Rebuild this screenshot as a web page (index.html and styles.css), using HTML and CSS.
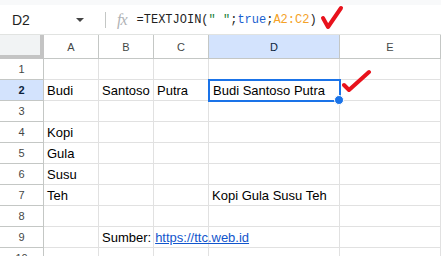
FILE: index.html
```html
<!DOCTYPE html>
<html lang="en">
<head>
    <meta charset="UTF-8">
    <meta name="viewport" content="width=device-width, initial-scale=1.0">
    <title>TEXTJOIN - Sheet</title>
    <link rel="stylesheet" href="styles.css">
</head>
<body>
    <div class="top-strip"></div>

    <!-- Formula bar -->
    <div class="formula-bar">
        <div class="name-box">
            <span class="cell-ref">D2</span>
            <span class="caret"></span>
        </div>
        <div class="divider"></div>
        <span class="fx">fx</span>
        <div class="formula">=TEXTJOIN(<span class="f-str">" "</span>;<span class="f-bool">true</span>;<span class="f-range">A2:C2</span>)</div>
        <svg class="tick tick-formula" width="24" height="26" viewBox="0 0 24 26">
            <path d="M3 13 L8 22 L21 3" />
        </svg>
    </div>

    <!-- Sheet grid -->
    <div class="sheet">
        <div class="corner"></div>
        <div class="col-head">A</div>
        <div class="col-head">B</div>
        <div class="col-head">C</div>
        <div class="col-head active">D</div>
        <div class="col-head">E</div>

        <div class="row-head">1</div>
        <div class="cell"></div><div class="cell"></div><div class="cell"></div><div class="cell"></div><div class="cell"></div>

        <div class="row-head active">2</div>
        <div class="cell">Budi</div>
        <div class="cell">Santoso</div>
        <div class="cell">Putra</div>
        <div class="cell selected">
            Budi Santoso Putra
            <span class="handle"></span>
            <svg class="tick tick-cell" width="30" height="24" viewBox="0 0 30 24">
                <path d="M2 16 L7 21 L27 3" />
            </svg>
        </div>
        <div class="cell"></div>

        <div class="row-head">3</div>
        <div class="cell"></div><div class="cell"></div><div class="cell"></div><div class="cell"></div><div class="cell"></div>

        <div class="row-head">4</div>
        <div class="cell">Kopi</div><div class="cell"></div><div class="cell"></div><div class="cell"></div><div class="cell"></div>

        <div class="row-head">5</div>
        <div class="cell">Gula</div><div class="cell"></div><div class="cell"></div><div class="cell"></div><div class="cell"></div>

        <div class="row-head">6</div>
        <div class="cell">Susu</div><div class="cell"></div><div class="cell"></div><div class="cell"></div><div class="cell"></div>

        <div class="row-head">7</div>
        <div class="cell">Teh</div><div class="cell"></div><div class="cell"></div>
        <div class="cell">Kopi Gula Susu Teh</div>
        <div class="cell"></div>

        <div class="row-head">8</div>
        <div class="cell"></div><div class="cell"></div><div class="cell"></div><div class="cell"></div><div class="cell"></div>

        <div class="row-head">9</div>
        <div class="cell"></div>
        <div class="cell spill">Sumber: <a href="#">https://ttc.web.id</a></div>
        <div class="cell"></div><div class="cell"></div><div class="cell"></div>

        <div class="row-head">10</div>
        <div class="cell"></div><div class="cell"></div><div class="cell"></div><div class="cell"></div><div class="cell"></div>
    </div>
</body>
</html>
```

FILE: styles.css
```css
/* Base */
body {
    margin: 0;
    width: 441px;
    height: 256px;
    overflow: hidden;
    background: #fff;
    font-family: "Liberation Sans", Arial, sans-serif;
    color: #000;
}

.top-strip {
    height: 5px;
    background: #f8f9fa;
}

/* Formula bar */
.formula-bar {
    height: 29px;
    display: flex;
    align-items: center;
    border-bottom: 1px solid #e1e3e1;
    position: relative;
}

.name-box {
    width: 93px;
    display: flex;
    align-items: center;
    justify-content: space-between;
    padding: 0 9px 0 12px;
    box-sizing: border-box;
}

.cell-ref {
    font-size: 14px;
    color: #1f1f1f;
}

.caret {
    width: 0;
    height: 0;
    border-left: 4px solid transparent;
    border-right: 4px solid transparent;
    border-top: 4px solid #444;
}

.divider {
    width: 1px;
    height: 16px;
    background: #c4c7c5;
    margin: 0 0 0 12px;
}

.fx {
    font-family: "Liberation Serif", "Times New Roman", serif;
    font-style: italic;
    font-size: 16px;
    color: #b0b3b6;
    margin: 0 10px 0 11px;
    letter-spacing: -1px;
}

.formula {
    font-family: "Liberation Mono", "DejaVu Sans Mono", monospace;
    font-size: 12px;
    color: #1f1f1f;
}

.f-str { color: #188038; }
.f-bool { color: #1a5fd0; }
.f-range { color: #f4a228; }

.tick path {
    fill: none;
    stroke: #e8121c;
    stroke-width: 4;
    stroke-linecap: round;
    stroke-linejoin: round;
}

.tick-formula {
    position: absolute;
    left: 320px;
    top: 0;
}

/* Sheet grid */
.sheet {
    display: grid;
    grid-template-columns: 44px 55px 55px 55px 131px 1fr;
    grid-template-rows: 24px repeat(10, 21px);
}

.sheet > div {
    box-sizing: border-box;
}

.corner {
    background: #f1f3f4;
    border-right: 4px solid #c4c4c4;
    border-bottom: 4px solid #c4c4c4;
}

.col-head,
.row-head {
    display: flex;
    align-items: center;
    justify-content: center;
    font-size: 11px;
    color: #444746;
    border-right: 1px solid #c4c7c5;
    border-bottom: 1px solid #c4c7c5;
    background: #fff;
}

.col-head:last-of-type {
    margin-right: 1px;
}

.row-head.active,
.col-head.active {
    background: #d3e3fd;
    color: #0b1f3a;
}

.row-head.active {
    font-weight: bold;
}

.cell {
    display: flex;
    align-items: center;
    padding: 1px 3px 0;
    font-size: 13px;
    white-space: nowrap;
    border-right: 1px solid #e1e1e1;
    border-bottom: 1px solid #e1e1e1;
    position: relative;
}

.spill {
    overflow: visible;
    z-index: 1;
}

.spill a {
    color: #1155cc;
    margin-left: 4px;
    text-decoration: underline;
}

.selected {
    outline: 2px solid #1a73e8;
    outline-offset: -1px;
    z-index: 2;
    padding-left: 4px;
}

.handle {
    position: absolute;
    right: -5px;
    bottom: -5px;
    width: 8px;
    height: 8px;
    background: #1a73e8;
    border: 1px solid #fff;
    border-radius: 50%;
}

.tick-cell {
    position: absolute;
    left: 133px;
    top: -11px;
}
```
